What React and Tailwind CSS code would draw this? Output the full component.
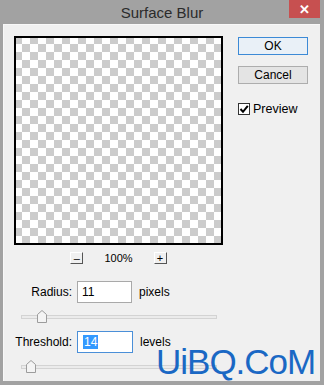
import React from "react";

function Thumb() {
  return (
    <svg width="10" height="13" viewBox="0 0 10 13" className="block">
      <path d="M0.5 12.5 V4.5 L5 0.5 L9.5 4.5 V12.5 Z" fill="#f4f4f4" stroke="#9c9c9c" strokeWidth="1" />
    </svg>
  );
}

function Slider({ thumbLeft }) {
  return (
    <div className="relative h-[13px] w-[196px] ml-[17px]">
      <div className="absolute left-0 right-0 top-[5px] h-[4px] border border-[#d3d3d3] bg-[#ebebeb]" />
      <div className="absolute top-0" style={{ left: thumbLeft }}>
        <Thumb />
      </div>
    </div>
  );
}

export default function App() {
  return (
    <div
      className="w-[324px] h-[385px] bg-[#a2a2a2] flex flex-col text-[12px] text-black"
      style={{ fontFamily: '"Liberation Sans", Arial, sans-serif' }}
    >
      {/* title bar */}
      <div className="relative h-[24px] flex items-center justify-center shrink-0">
        <span className="text-[15px] text-[#2b2b2b] leading-none">Surface Blur</span>
        <div className="absolute right-[4px] top-0 w-[31px] h-[18px] bg-[#c75050] flex items-center justify-center text-white text-[13px] font-bold leading-none">
          ✕
        </div>
      </div>

      {/* body */}
      <div className="relative ml-[3px] mr-[4px] h-[357px] bg-[#f0f0f0] border-t border-l border-[#f8f8f8]">
        <div className="flex">
          {/* left column */}
          <div className="flex flex-col ml-[10px] mt-[11px]">
            <div className="w-[209px] h-[209px] border-2 border-black bg-[image:conic-gradient(#ffffff_25%,#cccccc_0_50%,#ffffff_0_75%,#cccccc_0)] bg-[length:16px_16px] bg-[position:-2px_-2px]" />
            <div className="mt-[7px] flex items-center justify-center gap-[21px] h-[12px]">
              <div className="w-[13px] h-[12px] border-r border-b border-[#555] border-l border-l-[#fff] border-t border-t-[#fff] flex items-center justify-center text-[11px] leading-none">
                –
              </div>
              <span className="text-[11px] leading-none">100%</span>
              <div className="w-[13px] h-[12px] border-r border-b border-[#555] border-l border-l-[#fff] border-t border-t-[#fff] flex items-center justify-center text-[11px] leading-none">
                +
              </div>
            </div>
          </div>

          {/* right column */}
          <div className="flex flex-col ml-[15px] mt-[12px] w-[70px]">
            <div className="h-[18px] border border-[#3c8ad6] bg-[#e9f0f7] flex items-center justify-center">OK</div>
            <div className="mt-[11px] h-[18px] border border-[#adadad] bg-[#e4e4e4] flex items-center justify-center">Cancel</div>
            <div className="mt-[16px] flex items-center gap-[3px]">
              <div className="w-[12px] h-[12px] border border-[#333] bg-white flex items-center justify-center">
                <svg width="10" height="10" viewBox="0 0 10 10">
                  <path d="M1.5 5 L4 7.8 L8.8 1.8" fill="none" stroke="#000" strokeWidth="2" />
                </svg>
              </div>
              <span className="text-[12.5px]">Preview</span>
            </div>
          </div>
        </div>

        {/* radius */}
        <div className="mt-[17px] flex items-center">
          <span className="w-[68px] text-right">Radius:</span>
          <div className="ml-[5px] w-[55px] h-[22px] border border-[#a9a9a9] bg-white flex items-center pl-[4px]">11</div>
          <span className="ml-[7px]">pixels</span>
        </div>
        <div className="mt-[7px]">
          <Slider thumbLeft={16} />
        </div>

        {/* threshold */}
        <div className="mt-[8px] flex items-center">
          <span className="w-[68px] text-right">Threshold:</span>
          <div className="ml-[5px] w-[56px] h-[22px] border border-[#4a8fd8] bg-white flex items-center pl-[5px]">
            <span className="bg-[#3399ff] text-white px-[1px] leading-[14px]">14</span>
          </div>
          <span className="ml-[7px]">levels</span>
        </div>
        <div className="mt-[7px]">
          <Slider thumbLeft={5} />
        </div>

        {/* watermark */}
        <div
          className="absolute left-[152px] top-[324px] text-[35px] leading-[26px] text-[#1a68c4] tracking-[-1px]"
          style={{ fontFamily: '"Liberation Sans", Arial, sans-serif' }}
        >
          UiBQ.CoM
        </div>
      </div>
    </div>
  );
}
